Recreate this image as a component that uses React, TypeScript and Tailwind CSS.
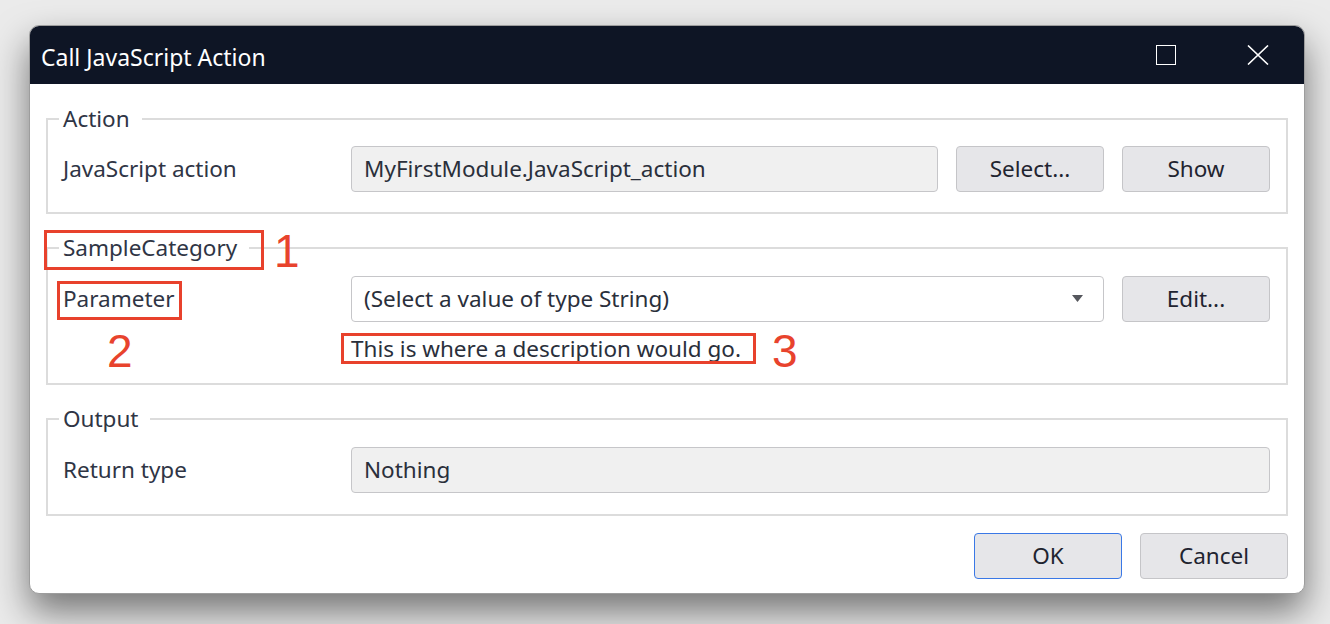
const font = { fontFamily: '"Noto Sans", "Open Sans", sans-serif' };
const digit = { fontFamily: '"Liberation Sans", Arial, sans-serif' };

function Legend({ children }: { children: React.ReactNode }) {
  return <legend className="ml-0 pl-[4px] pr-[12px] text-[22.5px] leading-[28px] text-[#2f3545]">{children}</legend>;
}

function Btn({ children, primary }: { children: React.ReactNode; primary?: boolean }) {
  return (
    <button
      className={
        "h-[46px] w-[148px] shrink-0 rounded-[4px] bg-[#e6e6e9] text-[22.5px] text-[#1f2430] " +
        (primary ? "border-[1.5px] border-[#3a78e6]" : "border-[1.5px] border-[#c5c5c8]")
      }
    >
      {children}
    </button>
  );
}

function Field({ children }: { children: React.ReactNode }) {
  return (
    <div className="flex h-[46px] flex-1 items-center rounded-[4px] border-[1.5px] border-[#c6c6c9] bg-[#f0f0f0] px-[12px] text-[22.5px] text-[#2a2f3b]">
      {children}
    </div>
  );
}

export default function App() {
  return (
    <div className="min-h-screen bg-[#ebebeb] pl-[29px] pt-[25px]" style={font}>
      <div className="relative flex h-[569px] w-[1276px] flex-col overflow-hidden rounded-[10px] border border-[#9d9d9d] bg-white shadow-[0_18px_36px_rgba(0,0,0,0.5)]">
        {/* title bar */}
        <div className="flex h-[58px] shrink-0 items-center bg-[#0e1525] pl-[11px] pr-[35px] pt-[5px] text-white">
          <span className="text-[23px]">Call JavaScript Action</span>
          <div className="mb-[5px] ml-auto h-[20px] w-[20px] border-[1.5px] border-white" />
          <svg width="22" height="20" viewBox="0 0 22 20" className="mb-[5px] ml-[71px]">
            <path d="M1 0.5 L21 19.5 M21 0.5 L1 19.5" stroke="#fff" strokeWidth="1.6" />
          </svg>
        </div>

        <div className="flex flex-col px-[16px]">
          <fieldset className="mt-[21px] border-2 border-[#dcdcdc] px-[11px] pb-[20px]">
            <Legend>Action</Legend>
            <div className="mt-[13px] flex items-center gap-[18px] pl-[4px] pr-[5px]">
              <div className="w-[270px] shrink-0 text-[22.5px] text-[#2f3545]">JavaScript action</div>
              <Field>MyFirstModule.JavaScript_action</Field>
              <Btn>Select...</Btn>
              <Btn>Show</Btn>
            </div>
          </fieldset>

          <fieldset className="mt-[20px] border-2 border-[#dcdcdc] px-[11px] pb-[20px]">
            <Legend>SampleCategory</Legend>
            <div className="mt-[14px] flex items-center gap-[18px] pl-[4px] pr-[5px]">
              <div className="w-[270px] shrink-0 text-[22.5px] text-[#2f3545]">Parameter</div>
              <div className="flex h-[46px] flex-1 items-center rounded-[4px] border-[1.5px] border-[#c6c6c9] bg-white px-[12px] text-[22.5px] text-[#2a2f3b]">
                <span>(Select a value of type String)</span>
                <svg width="11" height="8" viewBox="0 0 11 8" className="ml-auto mr-[8px]">
                  <path d="M0 0 H11 L5.5 7 Z" fill="#55575d" />
                </svg>
              </div>
              <Btn>Edit...</Btn>
            </div>
            <div className="mt-[13px] pl-[292px] text-[22.5px] leading-[28px] text-[#2a2f3b]">
              This is where a description would go.
            </div>
          </fieldset>

          <fieldset className="mt-[20px] border-2 border-[#dcdcdc] px-[11px] pb-[21px]">
            <Legend>Output</Legend>
            <div className="mt-[14px] flex items-center gap-[18px] pl-[4px] pr-[5px]">
              <div className="w-[270px] shrink-0 text-[22.5px] text-[#2f3545]">Return type</div>
              <Field>Nothing</Field>
            </div>
          </fieldset>

          <div className="mt-[17px] flex justify-end gap-[18px]">
            <Btn primary>OK</Btn>
            <Btn>Cancel</Btn>
          </div>
        </div>

        {/* annotations */}
        <div className="absolute left-[14px] top-[204px] h-[40px] w-[220px] border-[3.5px] border-[#e8412c]" />
        <div className="absolute left-[27px] top-[255px] h-[39px] w-[125px] border-[3.5px] border-[#e8412c]" />
        <div className="absolute left-[311px] top-[307px] h-[31px] w-[415px] border-[3.5px] border-[#e8412c]" />
        <span className="absolute left-[244px] top-[202px] text-[46px] leading-none text-[#e8432d]" style={digit}>1</span>
        <span className="absolute left-[77px] top-[302px] text-[46px] leading-none text-[#e8432d]" style={digit}>2</span>
        <span className="absolute left-[742px] top-[302px] text-[46px] leading-none text-[#e8432d]" style={digit}>3</span>
      </div>
    </div>
  );
}
